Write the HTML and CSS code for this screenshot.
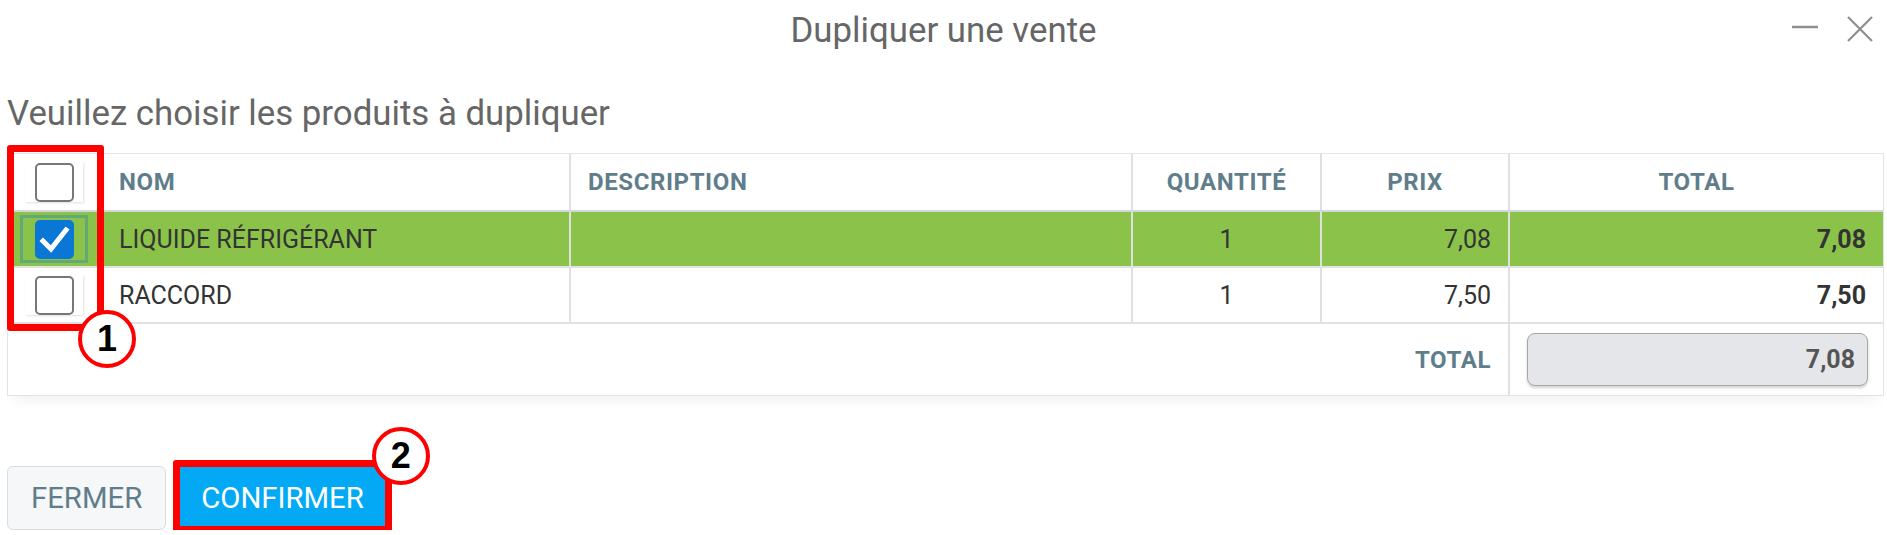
FILE: index.html
```html
<!DOCTYPE html>
<html lang="fr">
<head>
<meta charset="utf-8">
<title>Dupliquer une vente</title>
<link rel="stylesheet" href="styles.css">
</head>
<body>
<div class="dialog">
  <header class="titlebar">
    <span class="titlebar-spacer"></span>
    <h1 class="title">Dupliquer une vente</h1>
    <div class="win-controls">
      <svg class="win-icon" width="26" height="26" viewBox="0 0 26 26" aria-hidden="true">
        <line x1="0" y1="11" x2="26" y2="11" stroke="#8f8f8f" stroke-width="2.5"/>
      </svg>
      <svg class="win-icon" width="26" height="26" viewBox="0 0 26 26" aria-hidden="true">
        <path d="M1 1 L25 25 M25 1 L1 25" stroke="#8f8f8f" stroke-width="2.2" fill="none"/>
      </svg>
    </div>
  </header>

  <div class="content">
    <p class="prompt">Veuillez choisir les produits à dupliquer</p>

    <div class="grid-card">
      <table class="lines">
        <colgroup>
          <col class="w-check">
          <col class="w-name">
          <col class="w-desc">
          <col class="w-qty">
          <col class="w-price">
          <col class="w-total">
        </colgroup>
        <thead>
          <tr>
            <th class="c-check"><span class="cb-wrap"><span class="cb"></span></span></th>
            <th class="c-name">NOM</th>
            <th class="c-desc sep">DESCRIPTION</th>
            <th class="c-qty sep">QUANTITÉ</th>
            <th class="c-price sep">PRIX</th>
            <th class="c-total sep">TOTAL</th>
          </tr>
        </thead>
        <tbody>
          <tr class="is-selected">
            <td class="c-check"><span class="cb-wrap"><span class="cb on"><svg width="35" height="35" viewBox="0 0 35 35" aria-hidden="true"><polyline points="6,19 14,27 29,8" fill="none" stroke="#fff" stroke-width="5" stroke-linecap="square"/></svg></span></span></td>
            <td class="c-name">LIQUIDE RÉFRIGÉRANT</td>
            <td class="c-desc sep"></td>
            <td class="c-qty sep">1</td>
            <td class="c-price sep">7,08</td>
            <td class="c-total sep">7,08</td>
          </tr>
          <tr class="row-b">
            <td class="c-check"><span class="cb-wrap"><span class="cb"></span></span></td>
            <td class="c-name">RACCORD</td>
            <td class="c-desc sep"></td>
            <td class="c-qty sep">1</td>
            <td class="c-price sep">7,50</td>
            <td class="c-total sep">7,50</td>
          </tr>
        </tbody>
        <tfoot>
          <tr>
            <td class="sum-label" colspan="5">TOTAL</td>
            <td class="sum-cell sep"><div class="sum-field">7,08</div></td>
          </tr>
        </tfoot>
      </table>
      <div class="mark mark-box box-select"></div>
      <div class="mark mark-badge badge-select">1</div>
    </div>

    <div class="actions">
      <button class="btn btn-ghost" type="button">FERMER</button>
      <div class="btn-anchor">
        <button class="btn btn-primary" type="button">CONFIRMER</button>
        <div class="mark mark-box box-confirm"></div>
        <div class="mark mark-badge badge-confirm">2</div>
      </div>
    </div>
  </div>
</div>
</body>
</html>
```

FILE: styles.css
```css
* {
  box-sizing: border-box;
}

html, body {
  margin: 0;
  background: #fff;
}

body {
  font-family: Roboto, "Noto Sans", "Liberation Sans", sans-serif;
  color: #333;
}

/* ---- window title bar ---- */
.titlebar {
  display: grid;
  grid-template-columns: 1fr auto 1fr;
  align-items: center;
  height: 60px;
}

.title {
  margin: 0;
  font-size: 34.8px;
  line-height: 40px;
  font-weight: 400;
  color: #666;
}

.win-controls {
  justify-self: end;
  display: flex;
  align-items: center;
  gap: 29px;
  padding-right: 14px;
  margin-bottom: 2px;
}

.win-icon {
  display: block;
}

/* ---- body ---- */
.content {
  padding: 0 3px 0 7px;
}

.prompt {
  margin: 33px 0 20px;
  font-size: 34.8px;
  line-height: 40px;
  color: #666;
}

.grid-card {
  position: relative;
  border: 1px solid #dfe6eb;
  box-shadow: 0 10px 12px -6px rgba(0, 0, 0, 0.06);
}

.lines {
  width: 100%;
  border-collapse: collapse;
  table-layout: fixed;
  font-size: 25px;
}

.w-check { width: 94px; }
.w-name  { width: 468px; }
.w-desc  { width: 562px; }
.w-qty   { width: 189px; }
.w-price { width: 188px; }
.w-total { width: 374px; }

.lines th,
.lines td {
  padding: 0 17px;
  white-space: nowrap;
}

.lines th {
  height: 57px;
  font-size: 24px;
  font-weight: 700;
  letter-spacing: 0.6px;
  color: #607d8b;
  text-align: left;
  border-bottom: 2px solid #d6d6d6;
}

.lines .sep {
  border-left: 2px solid #e0e0e0;
}

.lines tbody td {
  height: 56px;
  border-bottom: 2px solid #e2e2e2;
}

.lines .c-check {
  padding: 0;
}

.lines th.c-qty,
.lines td.c-qty {
  text-align: center;
}

.lines th.c-price,
.lines th.c-total {
  text-align: center;
}

.lines td.c-price,
.lines td.c-total {
  text-align: right;
}

.lines td.c-total {
  font-weight: 700;
}

.is-selected {
  background: #8bc34a;
}

/* ---- checkboxes ---- */
.cb-wrap {
  display: flex;
  align-items: center;
  justify-content: center;
  width: 58px;
  height: 40px;
  margin-left: 17px;
  background: #fff;
  box-shadow: 1px 1px 2px rgba(0, 0, 0, 0.12);
}

.is-selected .cb-wrap {
  background: transparent;
  box-shadow: none;
  outline: 3px solid rgba(10, 118, 214, 0.32);
  outline-offset: 2px;
  height: 38px;
}

.cb {
  display: flex;
  align-items: center;
  justify-content: center;
  width: 39px;
  height: 39px;
  border: 2px solid #777;
  border-radius: 5px;
  background: #fff;
}

.cb.on {
  background: #0a76d6;
  border-color: #0a76d6;
}

.cb svg {
  display: block;
}

/* ---- totals row ---- */
.lines tfoot td {
  height: 72px;
}

.sum-label {
  text-align: right;
  font-size: 24px;
  font-weight: 700;
  letter-spacing: 0.6px;
  color: #607d8b;
}

.lines .sum-cell {
  padding: 0 15px 0 17px;
}

.sum-field {
  display: flex;
  align-items: center;
  justify-content: flex-end;
  height: 53px;
  padding-right: 12px;
  border: 1.5px solid #a8a8a8;
  border-radius: 8px;
  background: #e5e6ea;
  box-shadow: 0 2px 3px rgba(0, 0, 0, 0.18);
  font-size: 25px;
  font-weight: 700;
  color: #555;
}

/* ---- footer buttons ---- */
.actions {
  display: flex;
  gap: 11px;
  margin-top: 70px;
}

.btn-anchor {
  position: relative;
}

.btn {
  display: block;
  height: 64px;
  padding: 0 24px;
  font-family: Roboto, "Noto Sans", "Liberation Sans", sans-serif;
  font-size: 29.3px;
  border-radius: 6px;
  cursor: pointer;
}

.btn-ghost {
  padding: 0 23px;
  background: #f5f7f9;
  border: 1px solid #d6dde2;
  color: #607d8b;
}

.btn-primary {
  background: #03a9f4;
  border: 0;
  color: #fff;
  border-radius: 4px;
}

/* ---- callout annotations ---- */
.mark {
  position: absolute;
  pointer-events: none;
}

.mark-box {
  border: 7px solid #ff0000;
  border-radius: 3px;
}

.mark-badge {
  display: flex;
  align-items: center;
  justify-content: center;
  width: 58px;
  height: 58px;
  border: 4px solid #ff0000;
  border-radius: 50%;
  background: #fff;
  font-family: "Liberation Sans", Arial, sans-serif;
  font-weight: 700;
  font-size: 36px;
  color: #000;
}

.box-select {
  left: -1px;
  top: -9px;
  width: 97px;
  height: 186px;
}

.badge-select {
  left: 70px;
  top: 156px;
}

.box-confirm {
  left: -4px;
  right: -4px;
  top: -6px;
  bottom: -3px;
}

.badge-confirm {
  right: -42px;
  top: -39px;
}
```
